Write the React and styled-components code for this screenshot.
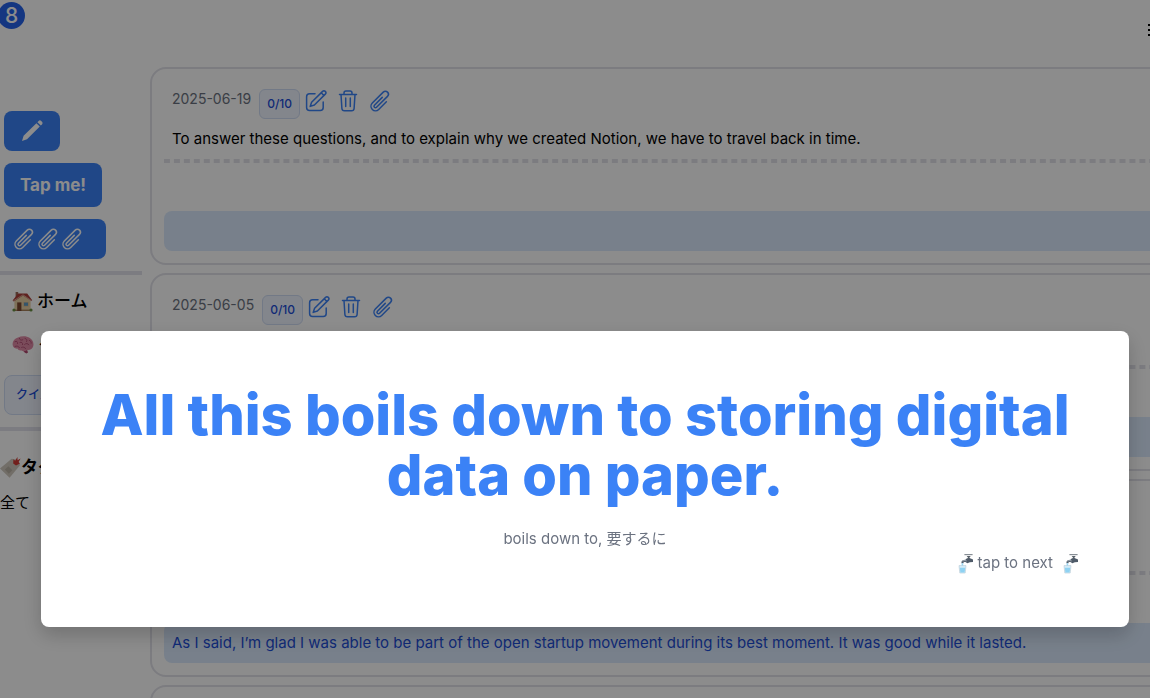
import React from "react";
import styled, { createGlobalStyle, css } from "styled-components";

const GlobalStyle = createGlobalStyle`
  *, *::before, *::after { box-sizing: border-box; }
  html, body { margin: 0; background: #fff; }
  body {
    font-family: Inter, "Noto Sans CJK JP", sans-serif;
    font-size: 15px;
    line-height: 24px;
    color: #000;
  }
  button { font: inherit; cursor: pointer; }
  h1, h2, p, ul { margin: 0; padding: 0; }
  svg { display: block; flex: none; }
`;

const Page = styled.div`
  height: 100vh;
  overflow: hidden;
`;

const Header = styled.header`
  display: flex;
  justify-content: space-between;
  align-items: flex-start;
  height: 67px;
  margin-right: -24px;
`;

const CountBadge = styled.span`
  display: flex;
  align-items: center;
  justify-content: center;
  width: 27px;
  height: 27px;
  margin: 2px 0 0 -2px;
  border-radius: 50%;
  background: #2563eb;
  color: #fff;
  font-size: 21px;
  font-weight: 500;
`;

const MenuButton = styled.button`
  padding: 0;
  margin: 18px 2px 0 0;
  border: 0;
  background: none;
`;

const Columns = styled.div`
  display: flex;
  align-items: flex-start;
  gap: 8px;
`;

const Sidebar = styled.aside`
  flex: none;
  width: 142px;
`;

const Actions = styled.div`
  display: flex;
  flex-direction: column;
  align-items: flex-start;
  gap: 12px;
  padding: 44px 4px 12px;
`;

const ActionButton = styled.button`
  display: flex;
  align-items: center;
  height: ${(p) => (p.$tall ? 44 : 40)}px;
  padding: ${(p) => (p.$clips ? "0 22px 0 8px" : "0 16px")};
  border: 0;
  border-radius: 8px;
  background: #3b82f6;
  color: #fff;
  font-size: 17px;
  font-weight: 700;
`;

const Divider = styled.hr`
  height: 4px;
  margin: 0;
  border: 0;
  background: #e2e2ec;
`;

const Nav = styled.nav`
  display: flex;
  flex-direction: column;
  align-items: flex-start;
  padding: 4px 4px 12px;
`;

const NavLink = styled.a`
  display: flex;
  align-items: center;
  gap: 4px;
  height: 44px;
  padding: 0 8px;
  color: #000;
  font-size: 17px;
  font-weight: 500;
  text-decoration: none;
  white-space: nowrap;
`;

const chip = css`
  border: 1px solid #cfdcf4;
  background: #eff4ff;
  color: #1d4ed8;
  font-weight: 500;
`;

const QuizButton = styled.button`
  ${chip}
  height: 40px;
  margin-top: 8px;
  padding: 0 11px;
  border-radius: 8px;
  font-size: 12px;
`;

const Tags = styled.section`
  padding-top: 24px;
`;

const TagTitle = styled.h2`
  display: flex;
  align-items: center;
  font-size: 17px;
  line-height: 24px;
  font-weight: 700;
`;

const TagLink = styled.a`
  display: block;
  margin-top: 12px;
  color: #000;
  text-decoration: none;
`;

const Feed = styled.main`
  flex: 1;
  display: flex;
  flex-direction: column;
  gap: 8px;
  min-width: 0;
  margin-right: -24px;
`;

const Card = styled.article`
  padding: 12px;
  border: 2px solid #e2e2ea;
  border-radius: 16px;
`;

const CardBody = styled.div`
  min-height: 78px;
  padding: 8px;
`;

const CardHead = styled.div`
  display: flex;
  align-items: flex-start;
  gap: 8px;
`;

const Day = styled.time`
  font-size: 14px;
  line-height: 20px;
  color: #6b7280;
`;

const Score = styled.span`
  ${chip}
  height: 30px;
  padding: 0 7px;
  border-radius: 6px;
  font-size: 12px;
  line-height: 28px;
`;

const Tools = styled.div`
  display: flex;
  gap: 8px;
  margin-left: -4px;
`;

const ToolButton = styled.button`
  padding: 0;
  border: 0;
  background: none;
  color: #3b82f6;
`;

const Sentence = styled.p`
  margin-top: 8px;
`;

const Dashes = styled.div`
  height: 4px;
  background: linear-gradient(90deg, #e2e2ea 60%, transparent 60%) 0 0 / 10px 4px round;
`;

const Answer = styled.p`
  min-height: 40px;
  margin-top: 48px;
  padding: 8px;
  border-radius: 8px;
  background: #dbeafe;
  color: #1d4ed8;
`;

/* The backdrop runs past the window's right and bottom edges, like the feed. */
const Backdrop = styled.div`
  position: fixed;
  inset: 0 -20px -260px 0;
  display: flex;
  align-items: center;
  justify-content: center;
  padding: 0 41px;
  background: rgba(0, 0, 0, 0.45);
`;

const Dialog = styled.div`
  flex: 1;
  padding: 54px 50px 52px;
  border-radius: 8px;
  background: #fff;
  color: #6b7280;
  text-align: center;
  box-shadow: 0 8px 20px rgba(0, 0, 0, 0.2);
`;

const Phrase = styled.h1`
  margin-bottom: 22px;
  font-size: 56px;
  line-height: 60px;
  font-weight: 800;
  color: #3b82f6;
`;

const NextButton = styled.button`
  display: flex;
  align-items: center;
  gap: 4px;
  height: 24px;
  margin-left: auto;
  padding: 0;
  border: 0;
  background: none;
  color: inherit;
`;

const NextLabel = styled.span`
  padding-right: 6px;
`;

const Stroke = ({ children, width = 1.5 }) => (
  <svg width="24" height="24" viewBox="0 0 24 24" fill="none" stroke="currentColor" strokeWidth={width} strokeLinecap="round" strokeLinejoin="round" aria-hidden="true">
    {children}
  </svg>
);

const ClipIcon = () => (
  <Stroke>
    <path d="M18.375 12.739l-7.693 7.693a4.5 4.5 0 0 1-6.364-6.364l10.94-10.94A3 3 0 1 1 19.5 7.372L8.552 18.32m.009-.01l-.01.01m5.699-9.941l-7.81 7.81a1.5 1.5 0 0 0 2.112 2.13" />
  </Stroke>
);

const EditIcon = () => (
  <Stroke>
    <path d="M11 4.8H5.6a3 3 0 0 0-3 3v10.6a3 3 0 0 0 3 3h10.6a3 3 0 0 0 3-3V13" />
    <path d="M6.2 17.4l1.4-4.2L18.6 2.4a1.9 1.9 0 0 1 2.7 2.7L10.4 16zM17.2 3.8l2.7 2.7" />
  </Stroke>
);

const TrashIcon = () => (
  <Stroke>
    <path d="M3.5 5.5h17M8 5.5V4a2 2 0 0 1 2-2h4a2 2 0 0 1 2 2v1.5M5 5.5l.9 14a2.5 2.5 0 0 0 2.5 2.3h7.2a2.5 2.5 0 0 0 2.5-2.3l.9-14M9.7 9v8.4M14.3 9v8.4" />
  </Stroke>
);

const PencilIcon = () => (
  <svg width="24" height="24" viewBox="0 0 24 24" fill="#fff" aria-hidden="true">
    <path d="M2 22l1.6-5.2L16.4 4.2l3.4 3.4L7 20.2zM17.4 3.2l1.2-1.2a1.8 1.8 0 0 1 2.6 0l.8.8a1.8 1.8 0 0 1 0 2.6l-1.2 1.2z" />
  </svg>
);

const ListIcon = () => (
  <svg width="24" height="24" viewBox="0 0 24 24" fill="#000" aria-hidden="true">
    <path d="M0 6h3v2H0zM0 11h3v2H0zM0 16h3v2H0zM6 6h18v2H6zM6 11h18v2H6zM6 16h18v2H6z" />
  </svg>
);

const HouseIcon = () => (
  <svg width="21" height="21" viewBox="0 0 21 21" aria-hidden="true">
    <path d="M2.4 9L10 3l8.6 6v11H2.4z" fill="#e8cfa4" />
    <path d="M2.4 18.6h16.2V20H2.4z" fill="#a8825c" />
    <path d="M3.6 1h2.6v5H3.6z" fill="#9c6a58" />
    <path d="M.6 9.6L6.2 2.4h9l5 6.8-.9.8L11 4.6 1.8 10.4z" fill="#ad3f3a" />
    <path d="M1.2 10L11 3.8l8.6 6" fill="none" stroke="#e9dccb" strokeWidth=".6" />
    <path d="M5.2 11.4h4.2V20H5.2z" fill="#7c4830" />
    <path d="M11.4 11h5.2v4.4h-5.2z" fill="#d9b98c" />
    <path d="M12 11.6h4v3.2h-4z" fill="#5f9cc4" />
    <circle cx="2" cy="19" r="1.6" fill="#6b8f42" />
    <circle cx="19" cy="19" r="1.6" fill="#6b8f42" />
  </svg>
);

const BrainIcon = () => (
  <svg width="22" height="22" viewBox="0 0 22 22" aria-hidden="true">
    <path d="M11 16.6l3.8-1.6 1.2 3.4-1.6 1.2-1.8-1.2z" fill="#b0486e" />
    <path d="M.8 11.6C-.1 8.4 2.2 4.4 6 3.4c3.6-1.7 9-1.5 11.8.6 3 1.8 4.3 5.4 3.4 8.2-.6 2.6-3.4 4.4-6 3.8-1.6 1.4-4.2 1.6-5.6.4-1.8.6-3.6-.4-4.2-1.8C3.2 15 1.2 13.6.8 11.6z" fill="#e08aa6" />
    <path d="M3 7.6c1.8-.8 3 .2 2.6 2M7.4 4.4c.4 1.8 2 2.2 3.4 1.4M8 8.4c1.6-.6 3 .4 2.6 2.2M13 4.4c1.8.4 2.4 1.8 1.6 3.2M12.6 10.4c1.4-1.4 3.4-1.2 4.2.4M17.4 6.4c1.4.4 2 1.4 1.8 2.8M3 12.4c1.8-.8 3.6-.2 4.4 1.2M9.6 13.4c1.6-.8 3.2-.2 4 1.2" fill="none" stroke="#b8557a" strokeWidth="1" strokeLinecap="round" />
  </svg>
);

const TagIcon = () => (
  <svg width="21" height="24" viewBox="0 0 21 24" aria-hidden="true">
    <path d="M0 13.6L11.6 3.8l4.8.6L20.2 10 9.6 22.8z" fill="#d0c9be" />
    <path d="M4.8 14.6l3.6-3.4 4 4-3.6 3.6z" fill="#b9b1a5" />
    <path d="M13.2 8.4l.2-4.2 1.8 1.6L17.4 2l.2 3.2 3-1.6-2 3.4 1.4 1.4-4 2.2z" fill="#cf3a33" />
  </svg>
);

const TapIcon = () => (
  <svg width="16" height="21" viewBox="0 0 16 21" aria-hidden="true">
    <path d="M6.4 1h8.2v1.2H6.4z" fill="#868d94" />
    <path d="M8.6 3h4.2L11.4 4.4 12.4 6H9l1-1.6z" fill="#59616a" />
    <path d="M3.4 10.2C3.2 7.8 5 6.8 7.4 6.8l1.2-1.2h4.2l2.2 1v2.4l-3.2.2-2.4 1-2-1.2c-1.6 0-2 .2-2 1.2z" fill="#4f5b69" />
    <path d="M4.6 8.2c1.2-.7 2.6-.7 4-.3" stroke="#c3cad1" strokeWidth=".8" fill="none" />
    <path d="M3.6 10.2h1.6v4H3.6z" fill="#9bd8f5" />
    <path d="M1 12.6h7l-.8 7.4H1.8z" fill="#d6eef9" stroke="#b3c8d4" strokeWidth=".6" />
    <path d="M1.8 14.8h5.4l-.6 4.6H2.4z" fill="#8fd2f2" />
  </svg>
);

const entries = [
  { day: "2025-06-19", sentence: "To answer these questions, and to explain why we created Notion, we have to travel back in time." },
  { day: "2025-06-05" },
  { answer: "As I said, I’m glad I was able to be part of the open startup movement during its best moment. It was good while it lasted." },
  {},
];

const Entry = ({ day, sentence, answer }) => (
  <Card>
    <CardBody>
      {day && (
        <CardHead>
          <Day dateTime={day}>{day}</Day>
          <Score>0/10</Score>
          <Tools>
            <ToolButton aria-label="Edit"><EditIcon /></ToolButton>
            <ToolButton aria-label="Delete"><TrashIcon /></ToolButton>
            <ToolButton aria-label="Attach"><ClipIcon /></ToolButton>
          </Tools>
        </CardHead>
      )}
      {sentence && <Sentence>{sentence}</Sentence>}
    </CardBody>
    <Dashes />
    <Answer>{answer}</Answer>
  </Card>
);

export default function App() {
  return (
    <>
      <GlobalStyle />
      <Page>
        <Header>
          <CountBadge>8</CountBadge>
          <MenuButton aria-label="Menu"><ListIcon /></MenuButton>
        </Header>
        <Columns>
          <Sidebar>
            <Actions>
              <ActionButton aria-label="Write"><PencilIcon /></ActionButton>
              <ActionButton $tall>Tap me!</ActionButton>
              <ActionButton $clips aria-label="Attachments">
                <ClipIcon /><ClipIcon /><ClipIcon />
              </ActionButton>
            </Actions>
            <Divider />
            <Nav>
              <NavLink href="#home"><HouseIcon />ホーム</NavLink>
              <NavLink href="#quiz"><BrainIcon />クイズ</NavLink>
              <QuizButton>クイズ</QuizButton>
            </Nav>
            <Divider />
            <Tags>
              <TagTitle><TagIcon />タグ</TagTitle>
              <TagLink href="#all">全て</TagLink>
            </Tags>
          </Sidebar>
          <Feed>
            {entries.map((entry, i) => <Entry key={i} {...entry} />)}
          </Feed>
        </Columns>
      </Page>
      <Backdrop>
        <Dialog role="dialog" aria-modal="true" aria-labelledby="phrase">
          <Phrase id="phrase">All this boils down to storing digital data on paper.</Phrase>
          <p>boils down to, 要するに</p>
          <NextButton>
            <TapIcon /><NextLabel>tap to next</NextLabel><TapIcon />
          </NextButton>
        </Dialog>
      </Backdrop>
    </>
  );
}
